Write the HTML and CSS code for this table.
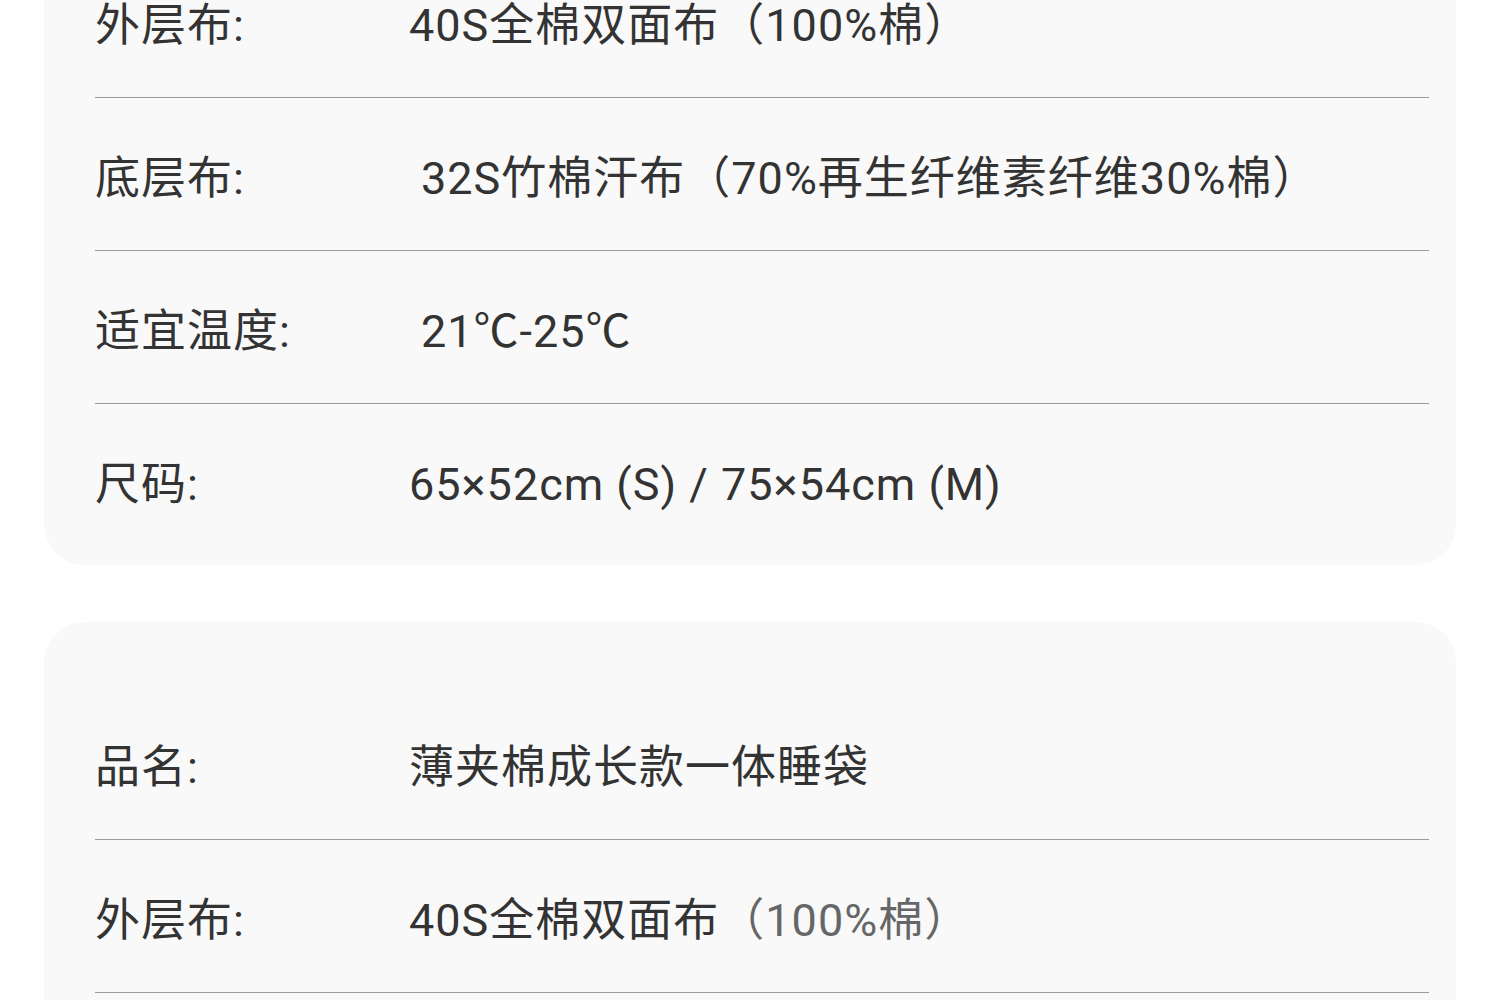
FILE: index.html
```html
<!DOCTYPE html>
<html lang="zh-CN">
<head>
<meta charset="utf-8">
<title>产品参数</title>
<link rel="stylesheet" href="styles.css">
</head>
<body>
<main class="page">
  <section class="card card-first">
    <div class="row"><div class="label">品名:</div><div class="value">薄夹棉成长款一体睡袋</div></div>
    <div class="row"><div class="label">外层布:</div><div class="value">40S全棉双面布（100%棉）</div></div>
    <div class="row"><div class="label">底层布:</div><div class="value value-indent">32S竹棉汗布（70%再生纤维素纤维30%棉）</div></div>
    <div class="row"><div class="label">适宜温度:</div><div class="value value-indent">21℃-25℃</div></div>
    <div class="row"><div class="label">尺码:</div><div class="value">65×52cm (S) / 75×54cm (M)</div></div>
  </section>
  <section class="card">
    <div class="row"><div class="label">品名:</div><div class="value">薄夹棉成长款一体睡袋</div></div>
    <div class="row"><div class="label">外层布:</div><div class="value">40S全棉双面布<span class="muted">（100%棉）</span></div></div>
    <div class="row"><div class="label">底层布:</div><div class="value value-indent">32S竹棉汗布（70%再生纤维素纤维30%棉）</div></div>
  </section>
</main>
</body>
</html>
```

FILE: styles.css
```css
html, body {
  margin: 0;
  padding: 0;
  background: #ffffff;
}
body {
  font-family: Roboto, "Noto Sans CJK SC", sans-serif;
  color: #333333;
  overflow: hidden;
}
.page {
  padding: 0 44px;
  display: flex;
  flex-direction: column;
  gap: 57px;
}
.card {
  background: #f9f9f9;
  border-radius: 40px;
  padding: 65px 27px 9px 51px;
}
.card-first {
  margin-top: -273px;
}
.row {
  display: grid;
  grid-template-columns: 314px 1fr;
  align-items: center;
  height: 152px;
  border-bottom: 1px solid #9a9a9a;
  font-size: 45px;
  letter-spacing: 1px;
}
.card .row:last-child {
  border-bottom: none;
}
.label, .value {
  white-space: nowrap;
  line-height: 1;
  padding-top: 8px;
}
.value-indent {
  padding-left: 12px;
}
.muted {
  color: #666666;
}
```
